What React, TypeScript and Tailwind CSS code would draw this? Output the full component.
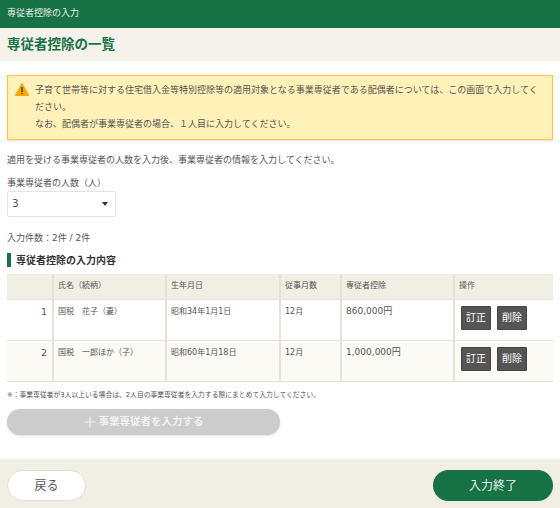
const jp = "font-['DejaVu_Sans','Noto_Sans_CJK_JP',sans-serif]";

const rows = [
  { no: 1, name: "国税　花子（妻）", birth: "昭和34年1月1日", months: "12月", amount: "860,000円", bg: "bg-white" },
  { no: 2, name: "国税　一郎ほか（子）", birth: "昭和60年1月18日", months: "12月", amount: "1,000,000円", bg: "bg-[#fcfaf4]" },
];

function WarningIcon() {
  return (
    <svg width="14" height="13" viewBox="0 0 14 13" className="shrink-0">
      <path d="M7 0.5 L13.8 12.5 L0.2 12.5 Z" fill="#f5a800" stroke="#f5a800" strokeLinejoin="round" />
      <rect x="6.3" y="4" width="1.4" height="5" fill="#4a3a10" />
      <rect x="6.3" y="9.8" width="1.4" height="1.4" fill="#4a3a10" />
    </svg>
  );
}

export default function App() {
  return (
    <div className={`${jp} flex h-[508px] w-[560px] flex-col overflow-hidden bg-white text-[#555555]`}>
      <div className="flex h-[28px] items-center bg-[#177245] px-[7px] text-[9px] text-[#e6efe9]">専従者控除の入力</div>
      <div className="flex h-[33px] items-center bg-[#f5f2eb] px-[7px] text-[13.5px] font-bold text-[#177245]">専従者控除の一覧</div>

      <div className="flex-1 px-[7px] pt-[14px]">
        <div className="flex h-[65px] gap-[6px] border border-[#fbc63c] bg-[#fff1b8] px-[7px] pt-[6px] text-[9px] leading-[17px] text-[#555555] shadow-sm">
          <div className="pt-[1px]"><WarningIcon /></div>
          <p>
            子育て世帯等に対する住宅借入金等特別控除等の適用対象となる事業専従者である配偶者については、この画面で入力してください。
            <br />
            なお、配偶者が事業専従者の場合、１人目に入力してください。
          </p>
        </div>

        <p className="mt-[13px] text-[9px] leading-[14px]">適用を受ける事業専従者の人数を入力後、事業専従者の情報を入力してください。</p>
        <p className="mt-[9px] text-[9px] leading-[14px]">事業専従者の人数（人）</p>
        <div className="mt-[1px] flex h-[26px] w-[109px] items-center justify-between rounded-[2px] border border-[#e8e4da] pl-[4px] pr-[7px] text-[10.5px]">
          <span>3</span>
          <span className="h-0 w-0 border-x-[3px] border-t-[4px] border-x-transparent border-t-[#333333]" />
        </div>
        <p className="mt-[14px] text-[9px] leading-[14px]">入力件数：2件 / 2件</p>
        <h2 className="mt-[8px] flex h-[14px] items-center border-l-[4px] border-[#177245] pl-[5px] text-[10px] font-bold text-[#333333]">専従者控除の入力内容</h2>

        <table className="mt-[7px] w-[546px] table-fixed border-collapse text-[8px]">
          <thead>
            <tr className="h-[25px] border-b border-[#e4e1d8] bg-[#f1eee4] text-left font-normal">
              <th className="w-[46px] border-r-2 border-[#e4e1d8] font-normal"></th>
              <th className="w-[113px] border-r-2 border-[#e4e1d8] pl-[4px] font-normal">氏名（続柄）</th>
              <th className="w-[114px] border-r-2 border-[#e4e1d8] pl-[4px] font-normal">生年月日</th>
              <th className="w-[61px] border-r-2 border-[#e4e1d8] pl-[4px] font-normal">従事月数</th>
              <th className="w-[113px] border-r-2 border-[#e4e1d8] pl-[4px] font-normal">専従者控除</th>
              <th className="pl-[4px] font-normal">操作</th>
            </tr>
          </thead>
          <tbody>
            {rows.map((r) => (
              <tr key={r.no} className={`h-[41px] border-b border-[#e4e1d8] ${r.bg}`}>
                <td className="border-r-2 border-[#e4e1d8] pr-[5px] pt-[5px] text-right align-top text-[9.5px]">{r.no}</td>
                <td className="border-r-2 border-[#e4e1d8] pl-[4px] pt-[6px] align-top">{r.name}</td>
                <td className="border-r-2 border-[#e4e1d8] pl-[4px] pt-[6px] align-top">{r.birth}</td>
                <td className="border-r-2 border-[#e4e1d8] pl-[4px] pt-[6px] align-top">{r.months}</td>
                <td className="border-r-2 border-[#e4e1d8] pl-[4px] pt-[5px] align-top text-[9px]">{r.amount}</td>
                <td className="pl-[6px] pt-[6px] align-top">
                  <div className="flex gap-[6px]">
                    <button className="flex h-[24px] w-[30px] items-center justify-center rounded-[1px] border border-[#444444] bg-[#555555] text-[10px] text-white">訂正</button>
                    <button className="flex h-[24px] w-[30px] items-center justify-center rounded-[1px] border border-[#444444] bg-[#555555] text-[10px] text-white">削除</button>
                  </div>
                </td>
              </tr>
            ))}
          </tbody>
        </table>

        <p className="mt-[8px] text-[6.8px] leading-[11px]">※：事業専従者が3人以上いる場合は、2人目の事業専従者を入力する際にまとめて入力してください。</p>
        <button className="mt-[8px] flex h-[26px] w-[273px] items-center justify-center gap-[3px] rounded-full bg-[#cccccc] text-[10.5px] font-bold text-[#f2f2f2] shadow-sm">
          <svg width="12" height="12" viewBox="0 0 12 12"><path d="M6 0.5V11.5M0.5 6H11.5" stroke="#f2f2f2" strokeWidth="1.2" /></svg>
          事業専従者を入力する
        </button>
      </div>

      <div className="flex h-[49px] items-start justify-between bg-[#f1eee4] px-[7px] pt-[11px]">
        <button className="flex h-[31px] w-[79px] items-center justify-center rounded-full border border-[#e4dfd2] bg-white text-[12px] text-[#555555]">戻る</button>
        <button className="flex h-[31px] w-[120px] items-center justify-center rounded-full bg-[#177245] text-[12px] text-[#e6efe9]">入力終了</button>
      </div>
    </div>
  );
}
